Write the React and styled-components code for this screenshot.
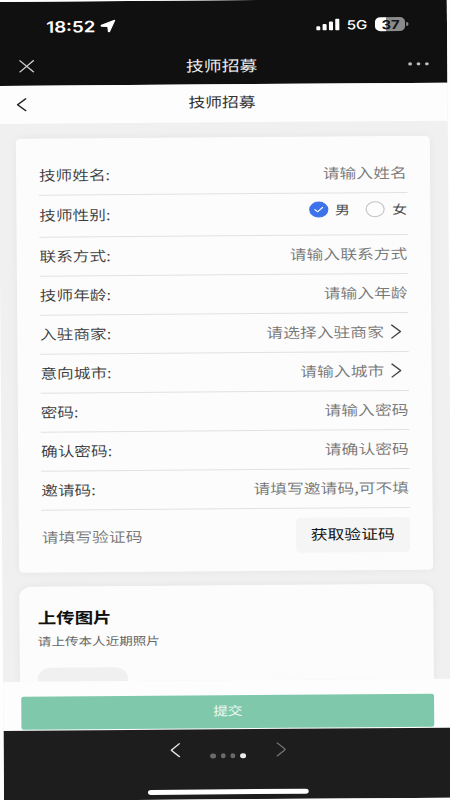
import React, { useState } from 'react';
import styled, { createGlobalStyle } from 'styled-components';

const GlobalStyle = createGlobalStyle`
  * { box-sizing: border-box; }
  body { margin: 0; background: #fff; }
  input, button { font: inherit; border: 0; padding: 0; margin: 0; background: none; }
`;

const Viewport = styled.div`
  width: 450px;
  height: 800px;
  overflow: hidden;
  background: #fefefe;
`;

const Phone = styled.div`
  width: 374px;
  height: 799px;
  display: flex;
  flex-direction: column;
  overflow: hidden;
  background: #f0f0f0;
  font-family: 'Noto Sans CJK SC', 'Noto Sans', sans-serif;
  font-size: 14px;
  color: #333;
  transform: matrix(1.2, -0.009, 0.0075, 1, -2, 2);
  transform-origin: 0 0;
`;

const Top = styled.header`
  height: 83.5px;
  flex: none;
  background: #101010;
  color: #f5f5f5;
`;

const StatusBar = styled.div`
  height: 50px;
  padding: 0 32.4px 0 40px;
  display: flex;
  align-items: center;
  font-family: Inter, sans-serif;
  color: #fff;
`;

const Clock = styled.span`
  font-size: 15.6px;
  font-weight: 600;
  line-height: 20px;
  margin-right: 3.6px;
  padding-top: 1px;
  width: 41.4px;
  white-space: nowrap;
`;

const Indicators = styled.div`
  margin-left: auto;
  display: flex;
  align-items: center;
`;

const Network = styled.span`
  font-size: 12.6px;
  font-weight: 500;
  line-height: 16px;
  width: 17px;
  margin: 1px 7px 0 5.5px;
`;

const Battery = styled.div`
  width: 25px;
  height: 14px;
  border-radius: 4.5px;
  background: linear-gradient(90deg, #fff 37%, #8b8b8b 37%);
  color: #161616;
  font-size: 12.4px;
  font-weight: 700;
  line-height: 15px;
  text-align: center;
`;

const BatteryTip = styled.div`
  width: 1.6px;
  height: 4px;
  margin-left: 0.6px;
  border-radius: 0 2px 2px 0;
  background: #8b8b8b;
`;

const Bar = styled.div`
  display: grid;
  grid-template-columns: 60px 1fr 60px;
  align-items: center;
  height: ${(p) => p.$height}px;
  flex: none;
  background: ${(p) => p.$bg};
  color: ${(p) => p.$color};
  font-size: ${(p) => p.$size}px;
  line-height: 20px;
`;

const BarTitle = styled.h1`
  margin: 0;
  padding: 0 2px ${(p) => p.$drop || 0}px 0;
  font-size: inherit;
  font-weight: 400;
  text-align: center;
`;

const IconButton = styled.button`
  display: flex;
  justify-content: ${(p) => p.$side || 'flex-start'};
  padding: 0 ${(p) => p.$right || 0}px 0 ${(p) => p.$left || 0}px;
  color: inherit;
`;

const Content = styled.main`
  height: 558.5px;
  flex: none;
  overflow: hidden;
  padding: 15px 15.5px 0 14.2px;
  display: flex;
  flex-direction: column;
  gap: 14.4px;
`;

const Card = styled.section`
  flex: none;
  height: ${(p) => p.$height}px;
  padding: ${(p) => p.$pad};
  border-radius: ${(p) => p.$radius}px;
  background: #fcfcfc;
  box-shadow: 0 0 8px rgba(0, 0, 0, 0.05);
`;

const Row = styled.label`
  height: ${(p) => p.$height || 39.05}px;
  padding-bottom: 2px;
  display: flex;
  align-items: center;
  border-bottom: 1px solid #e1e1e1;
  line-height: 20px;
`;

const Label = styled.span`
  flex: none;
  color: #3a3a3a;
  white-space: nowrap;
  font-size: 13.9px;
  font-weight: 350;
`;

const Field = styled.input`
  flex: 1;
  min-width: 0;
  height: 24px;
  outline: 0;
  color: #333;
  font-weight: 350;
  text-align: ${(p) => p.$align || 'right'};
  &::placeholder { color: #757575; opacity: 1; }
`;

const ArrowSlot = styled.span`
  display: flex;
  padding: 1px 5.6px 0 5.4px;
  color: #444;
`;

const Options = styled.div`
  margin-left: auto;
  display: flex;
  gap: 13.2px;
  padding-bottom: 6px;
`;

const Option = styled.button`
  display: flex;
  align-items: center;
  gap: 6px;
  color: #484848;
  font-size: 12.4px;
  line-height: 16px;
`;

const Radio = styled.span`
  width: 16px;
  height: 16px;
  border-radius: 50%;
  display: flex;
  align-items: center;
  justify-content: center;
  border: 1px solid ${(p) => (p.$on ? '#3d73ea' : '#c4c4c4')};
  background: ${(p) => (p.$on ? '#3d73ea' : '#fdfdfd')};
`;

const CodeRow = styled.div`
  height: 53px;
  padding-bottom: 1px;
  display: flex;
  align-items: center;
`;

const CodeButton = styled.button`
  width: 94.5px;
  height: 34.5px;
  border-radius: 4px;
  background: #f5f5f5;
  color: #151515;
  padding-bottom: 2px;
`;

const UploadTitle = styled.h2`
  margin: 0;
  font-size: 15.4px;
  line-height: 22px;
  font-weight: 700;
  color: #111;
`;

const UploadHint = styled.p`
  margin: 4px 0 18px;
  font-size: 11.3px;
  line-height: 18px;
  color: #666;
`;

const UploadBox = styled.div`
  width: 75px;
  height: 75px;
  border-radius: 11px;
  background: #f0f0f0;
`;

const Footer = styled.div`
  flex: none;
  height: 49px;
  padding: 15px 15px 0;
  background: #fdfdfd;
`;

const Submit = styled.button`
  display: block;
  width: 100%;
  height: 33px;
  border-radius: 2px;
  background: #7fc8ab;
  color: #eefaf4;
  font-size: 12.2px;
  line-height: 30px;
  padding-bottom: 3px;
`;

const BottomNav = styled.nav`
  flex: 1;
  background: #1d1d1d;
  display: flex;
  flex-direction: column;
  align-items: center;
  justify-content: space-between;
  padding: 13px 0 5.5px;
`;

const Pager = styled.div`
  width: 96px;
  display: flex;
  align-items: flex-start;
  justify-content: space-between;
`;

const Dots = styled.div`
  display: flex;
  gap: 4px;
  padding-top: 11px;
`;

const Dot = styled.span`
  width: 4.4px;
  height: 5px;
  border-radius: 50%;
  background: ${(p) => (p.$active ? '#ececec' : '#6a6a6a')};
`;

const HomeIndicator = styled.div`
  width: 134px;
  height: 4.6px;
  border-radius: 3px;
  background: #fff;
`;

function Chevron({ dir = 'right', w = 8, h = 14, color = 'currentColor', stroke = 1.3 }) {
  const d = dir === 'right' ? `M.7 .7 L${w - 0.7} ${h / 2} L.7 ${h - 0.7}` : `M${w - 0.7} .7 L.7 ${h / 2} L${w - 0.7} ${h - 0.7}`;
  return (
    <svg width={w} height={h} fill="none" stroke={color} strokeWidth={stroke}>
      <path d={d} />
    </svg>
  );
}

const baseFields = [
  { label: '联系方式:', placeholder: '请输入联系方式' },
  { label: '技师年龄:', placeholder: '请输入年龄' },
  { label: '入驻商家:', placeholder: '请选择入驻商家', arrow: true },
  { label: '意向城市:', placeholder: '请输入城市', arrow: true },
  { label: '密码:', placeholder: '请输入密码' },
  { label: '确认密码:', placeholder: '请确认密码' },
  { label: '邀请码:', placeholder: '请填写邀请码,可不填' },
];

function FormRow({ label, placeholder, arrow }) {
  return (
    <Row>
      <Label>{label}</Label>
      <Field placeholder={placeholder} />
      {arrow && (
        <ArrowSlot>
          <Chevron w={9} h={15} />
        </ArrowSlot>
      )}
    </Row>
  );
}

export default function App() {
  const [gender, setGender] = useState('男');
  return (
    <Viewport>
      <GlobalStyle />
      <Phone>
        <Top>
          <StatusBar>
            <Clock>18:52</Clock>
            <svg width="13" height="15" viewBox="0 0 13 15">
              <path
                d="M12.1 1.2 L7.8 12.2 Q7.2 13 6.8 12.1 L6.4 7.4 L1.2 7 Q.2 6.5 1.1 6Z"
                fill="#fff"
                stroke="#fff"
                strokeWidth="1"
                strokeLinejoin="round"
              />
            </svg>
            <Indicators>
              <svg width="20" height="12" fill="#fff">
                <rect x="0" y="7.6" width="3.4" height="4.4" rx="1" />
                <rect x="5.3" y="5.4" width="3.4" height="6.6" rx="1" />
                <rect x="10.6" y="3" width="3.4" height="9" rx="1" />
                <rect x="15.9" y="0" width="3.4" height="12" rx="1" />
              </svg>
              <Network>5G</Network>
              <Battery>37</Battery>
              <BatteryTip />
            </Indicators>
          </StatusBar>
          <Bar $height={29} $bg="transparent" $color="#ececec" $size={14.9}>
            <IconButton $left={17} aria-label="close">
              <svg width="13" height="13" fill="none" stroke="#c9c9c9" strokeWidth="1.2">
                <path d="M.5 .5 L12.5 12.5 M12.5 .5 L.5 12.5" />
              </svg>
            </IconButton>
            <BarTitle>技师招募</BarTitle>
            <IconButton $side="flex-end" $right={15.4} aria-label="more">
              <svg width="18" height="4" fill="#bdbdbd">
                <circle cx="2" cy="2" r="1.6" />
                <circle cx="9" cy="2" r="1.6" />
                <circle cx="16" cy="2" r="1.6" />
              </svg>
            </IconButton>
          </Bar>
        </Top>
        <Bar $height={38} $bg="#fdfdfd" $color="#333" $size={14}>
          <IconButton $left={15} aria-label="back">
            <Chevron dir="left" w={8.5} h={14} color="#222" />
          </IconButton>
          <BarTitle $drop={2.5}>技师招募</BarTitle>
        </Bar>
        <Content>
          <Card $height={434.6} $radius={4} $pad="18.4px 19px 0 18.8px">
            <FormRow label="技师姓名:" placeholder="请输入姓名" />
            <Row as="div" $height={42}>
              <Label>技师性别:</Label>
              <Options>
                {['男', '女'].map((g) => (
                  <Option key={g} onClick={() => setGender(g)}>
                    <Radio $on={gender === g}>
                      {gender === g && (
                        <svg width="8" height="6" fill="none" stroke="#fff" strokeWidth="1.1">
                          <path d="M.5 2.8 L3 5.2 L7.5 .6" />
                        </svg>
                      )}
                    </Radio>
                    {g}
                  </Option>
                ))}
              </Options>
            </Row>
            {baseFields.map((f) => (
              <FormRow key={f.label} {...f} />
            ))}
            <CodeRow>
              <Field $align="left" placeholder="请填写验证码" />
              <CodeButton>获取验证码</CodeButton>
            </CodeRow>
          </Card>
          <Card $height={180} $radius={10} $pad="18.6px 15px 0 15px">
            <UploadTitle>上传图片</UploadTitle>
            <UploadHint>请上传本人近期照片</UploadHint>
            <UploadBox />
          </Card>
        </Content>
        <Footer>
          <Submit>提交</Submit>
        </Footer>
        <BottomNav>
          <Pager>
            <Chevron dir="left" w={8.5} h={15} color="#e2e2e2" />
            <Dots>
              <Dot />
              <Dot />
              <Dot />
              <Dot $active />
            </Dots>
            <Chevron w={8.5} h={15} color="#757575" stroke={1.1} />
          </Pager>
          <HomeIndicator />
        </BottomNav>
      </Phone>
    </Viewport>
  );
}
